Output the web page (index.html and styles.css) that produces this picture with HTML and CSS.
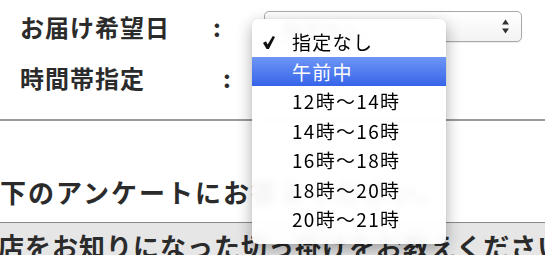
FILE: index.html
```html
<!DOCTYPE html>
<html lang="ja">
<head>
    <meta charset="UTF-8">
    <title>お届け希望日</title>
    <link rel="stylesheet" href="styles.css">
</head>
<body>
  <div class="page">

    <div class="field-row first">
      <span class="label">お届け希望日</span>
      <span class="colon">:</span>
      <div class="select">
        <span class="select-text">指定なし</span>
        <svg class="select-arrows" width="7" height="15" viewBox="0 0 7 15">
          <polygon points="0,5.5 3.5,0.5 7,5.5" fill="#333"/>
          <polygon points="0,9.5 3.5,14.5 7,9.5" fill="#333"/>
        </svg>
      </div>
    </div>

    <div class="field-row">
      <span class="label">時間帯指定</span>
      <span class="colon shifted">:</span>
    </div>

    <hr class="divider">

    <p class="notice">以下のアンケートにお答えください。</p>

    <div class="question">
      <p class="question-text">当店をお知りになった切っ掛けをお教えください</p>
    </div>

    <!-- open time slot menu -->
    <ul class="menu">
      <li class="menu-item checked">
        <svg class="check" width="12" height="13" viewBox="0 0 12 13">
          <polygon points="0,7 3,5.3 4.6,8.4 9.8,0 12,1.1 5.9,13 3.6,13" fill="#111"/>
        </svg>
        指定なし
      </li>
      <li class="menu-item active">午前中</li>
      <li class="menu-item">12時～14時</li>
      <li class="menu-item">14時～16時</li>
      <li class="menu-item">16時～18時</li>
      <li class="menu-item">18時～20時</li>
      <li class="menu-item">20時～21時</li>
    </ul>

  </div>
</body>
</html>
```

FILE: styles.css
```css
body {
    margin: 0;
    background: #fff;
    font-family: "Noto Sans CJK JP", "Noto Sans", sans-serif;
    color: #2b2b2b;
    overflow: hidden;
}

.page {
    position: relative;
    width: 545px;
    height: 255px;
    overflow: hidden;
}

.field-row {
    display: flex;
    align-items: center;
    height: 31px;
    margin-top: 20px;
    padding-left: 20px;
}

.field-row.first {
    margin-top: 11px;
}

.label {
    width: 193px;
    font-size: 24px;
    font-weight: 700;
    letter-spacing: 1px;
    white-space: nowrap;
}

.colon {
    width: 51px;
    font-size: 24px;
    font-weight: 700;
}

.colon.shifted {
    margin-left: 10px;
}

/* native looking select box */
.select {
    box-sizing: border-box;
    width: 258px;
    height: 31px;
    border: 1px solid #a9a9a9;
    border-radius: 5px;
    background: linear-gradient(#fff, #f3f3f3);
    box-shadow: 0 1px 1px rgba(0, 0, 0, 0.08);
    display: flex;
    align-items: center;
    justify-content: space-between;
    padding: 0 12px 0 18px;
}

.select-text {
    padding-top: 5px;
    font-size: 19px;
    letter-spacing: 1px;
    color: #111;
}

.divider {
    margin: 26px 0 0 0;
    border: 0;
    border-top: 2px solid #9a9a9a;
}

.notice {
    margin: 56px 0 0 -28px;
    font-size: 26px;
    line-height: 30px;
    font-weight: 700;
    letter-spacing: 2px;
    white-space: nowrap;
}

.question {
    margin-top: 15px;
    border-top: 1px solid #8a8a8a;
    background: #e6e6e6;
    height: 40px;
}

.question-text {
    margin: 8px 0 0 -29px;
    font-size: 26px;
    line-height: 30px;
    font-weight: 700;
    letter-spacing: 1px;
    white-space: nowrap;
}

/* pop-up menu over the form */
.menu {
    position: absolute;
    top: 19px;
    left: 252px;
    width: 194px;
    margin: 0;
    padding: 8px 0 10px 0;
    list-style: none;
    background: rgba(255, 255, 255, 0.94);
    backdrop-filter: blur(4px);
    border-radius: 6px;
    box-shadow: 0 5px 16px rgba(0, 0, 0, 0.32), 0 0 1px rgba(0, 0, 0, 0.2);
}

.menu-item {
    position: relative;
    height: 29.5px;
    line-height: 29.5px;
    padding-left: 40px;
    font-size: 19px;
    letter-spacing: 1.3px;
    color: #000;
}

.menu-item.active {
    background: linear-gradient(#6e96f6, #3664e9);
    color: #fff;
}

.check {
    position: absolute;
    left: 11px;
    top: 9px;
}
```
